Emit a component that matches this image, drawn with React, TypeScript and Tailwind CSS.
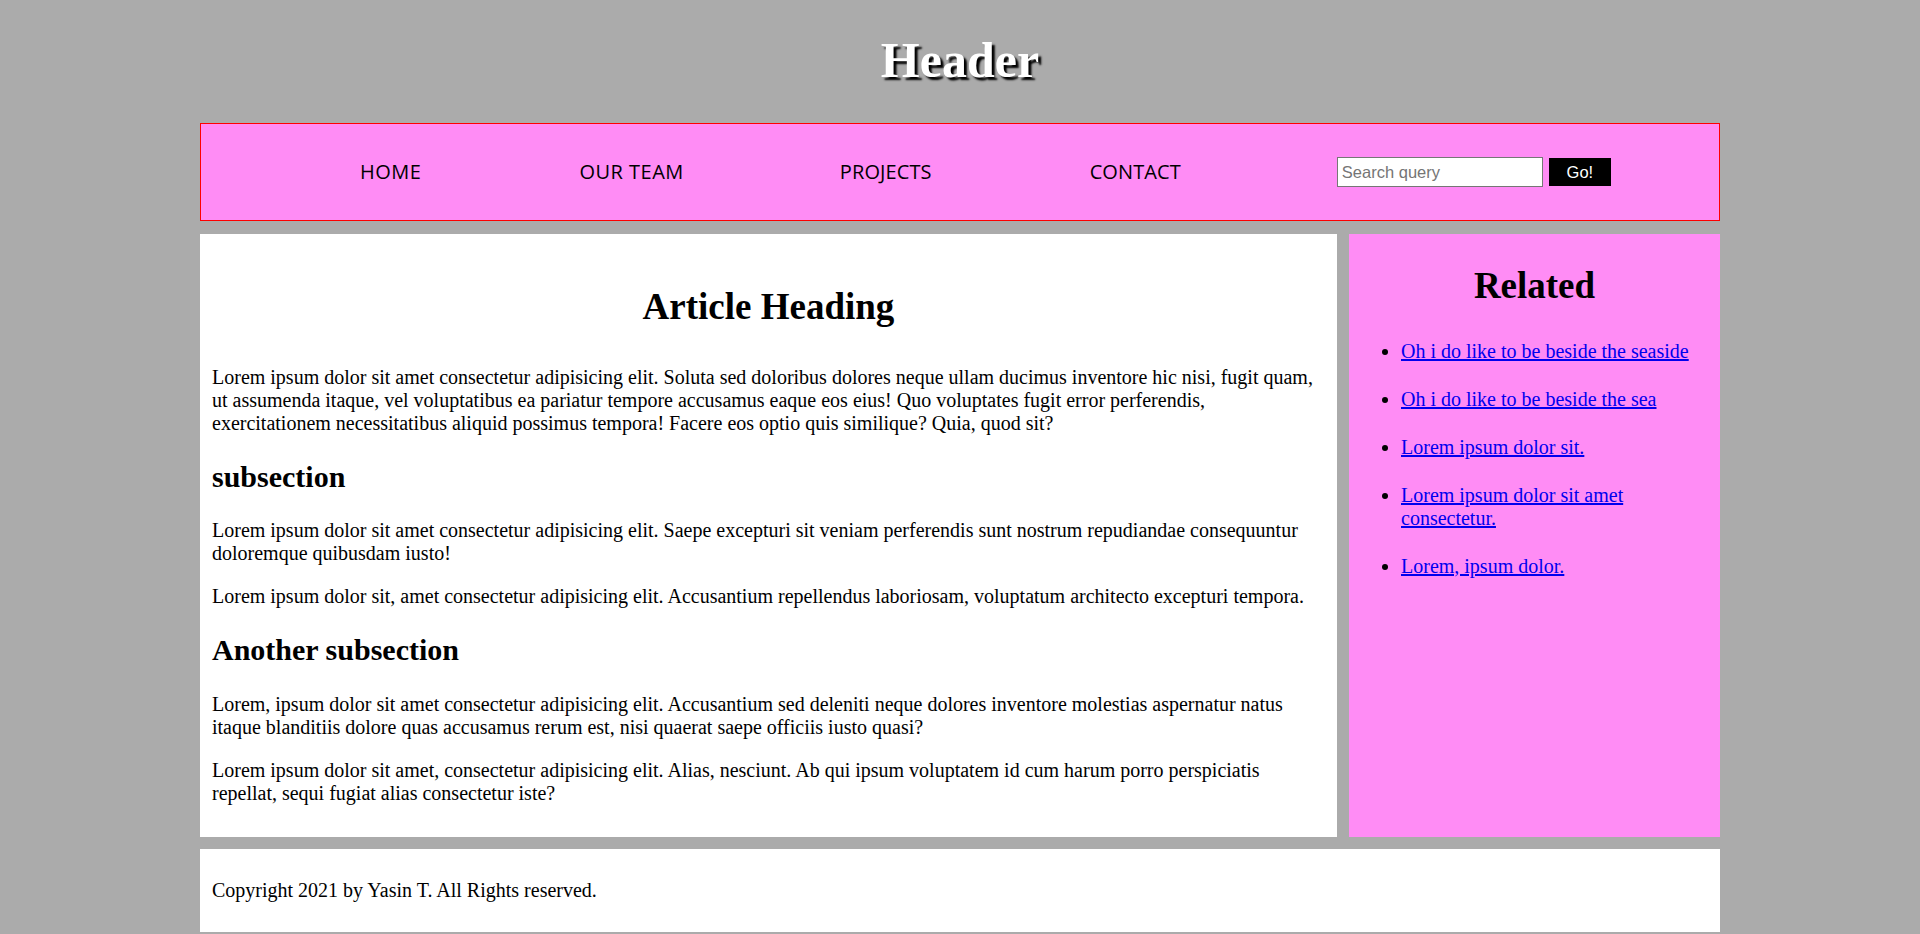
import React from "react";

const serif = "font-['Liberation_Serif','Times_New_Roman',serif]";

export default function App() {
  const links = [
    "Oh i do like to be beside the seaside",
    "Oh i do like to be beside the sea",
    "Lorem ipsum dolor sit.",
    "Lorem ipsum dolor sit amet consectetur.",
    "Lorem, ipsum dolor.",
  ];
  return (
    <div className={`min-h-screen bg-[#ababab] ${serif} text-black`}>
      <div className="w-[1520px] mx-auto">
        <header className="pt-[32px] pb-[35px]">
          <h1 className="text-center text-[50px] leading-[56px] font-bold text-white [text-shadow:3px_3px_2px_#000]">
            Header
          </h1>
        </header>

        <nav className="h-[98px] border border-[#ff0000] bg-[#ff8cf5] flex items-center pl-[159px] font-['Open_Sans',sans-serif] text-[20px] leading-[28px]">
          <a className="mr-[158px] tracking-[0.5px]">HOME</a>
          <a className="mr-[156px] tracking-[0.5px]">OUR TEAM</a>
          <a className="mr-[158px] tracking-[0.1px]">PROJECTS</a>
          <a className="mr-[156px] tracking-[0.1px]">CONTACT</a>
          <form className="flex items-center gap-[6px]" onSubmit={(e) => e.preventDefault()}>
            <input
              type="text"
              placeholder="Search query"
              className="w-[206px] h-[30px] bg-white border border-[#767676] pl-[4px] font-['Liberation_Sans',Arial,sans-serif] text-[16.5px] placeholder:text-[#757575] outline-none"
            />
            <button
              type="submit"
              className="w-[62px] h-[28px] bg-black text-white font-['Liberation_Sans',Arial,sans-serif] text-[16.5px] leading-[28px]"
            >
              Go!
            </button>
          </form>
        </nav>

        <div className="mt-[13px] flex gap-[12px] items-stretch">
          <article className="w-[1137px] bg-white px-[12px] pt-[12px] pb-[12px] text-[20px] leading-[23px]">
            <h1 className="text-center text-[37px] leading-[42.5px] font-bold mt-[40px] mb-[37px]">
              Article Heading
            </h1>
            <p className="mt-[20px] mb-[20px]">
              Lorem ipsum dolor sit amet consectetur adipisicing elit. Soluta sed doloribus dolores neque ullam ducimus inventore hic nisi, fugit quam, ut assumenda itaque, vel voluptatibus ea pariatur tempore accusamus eaque eos eius! Quo voluptates fugit error perferendis, exercitationem necessitatibus aliquid possimus tempora! Facere eos optio quis similique? Quia, quod sit?
            </p>
            <h2 className="text-[30px] leading-[34.5px] font-bold my-[25px]">subsection</h2>
            <p className="my-[20px]">
              Lorem ipsum dolor sit amet consectetur adipisicing elit. Saepe excepturi sit veniam perferendis sunt nostrum repudiandae consequuntur doloremque quibusdam iusto!
            </p>
            <p className="my-[20px]">
              Lorem ipsum dolor sit, amet consectetur adipisicing elit. Accusantium repellendus laboriosam, voluptatum architecto excepturi tempora.
            </p>
            <h2 className="text-[30px] leading-[34.5px] font-bold my-[25px]">Another subsection</h2>
            <p className="my-[20px]">
              Lorem, ipsum dolor sit amet consectetur adipisicing elit. Accusantium sed deleniti neque dolores inventore molestias aspernatur natus itaque blanditiis dolore quas accusamus rerum est, nisi quaerat saepe officiis iusto quasi?
            </p>
            <p className="my-[20px]">
              Lorem ipsum dolor sit amet, consectetur adipisicing elit. Alias, nesciunt. Ab qui ipsum voluptatem id cum harum porro perspiciatis repellat, sequi fugiat alias consectetur iste?
            </p>
          </article>

          <aside className="w-[371px] bg-[#ff8cf5] px-[12px] pt-[12px] text-[20px] leading-[23px]">
            <h1 className="text-center text-[37px] leading-[42.5px] font-bold mt-[19px] mb-[32px]">
              Related
            </h1>
            <ul className="list-disc pl-[40px]">
              {links.map((l) => (
                <li key={l} className="mb-[25px]">
                  <a href="#" className="text-[#0000ee] underline">
                    {l}
                  </a>
                </li>
              ))}
            </ul>
          </aside>
        </div>

        <footer className="mt-[12px] bg-white px-[12px] py-[10px] text-[20px] leading-[23px]">
          <p className="my-[20px]">Copyright 2021 by Yasin T. All Rights reserved.</p>
        </footer>
      </div>
    </div>
  );
}
